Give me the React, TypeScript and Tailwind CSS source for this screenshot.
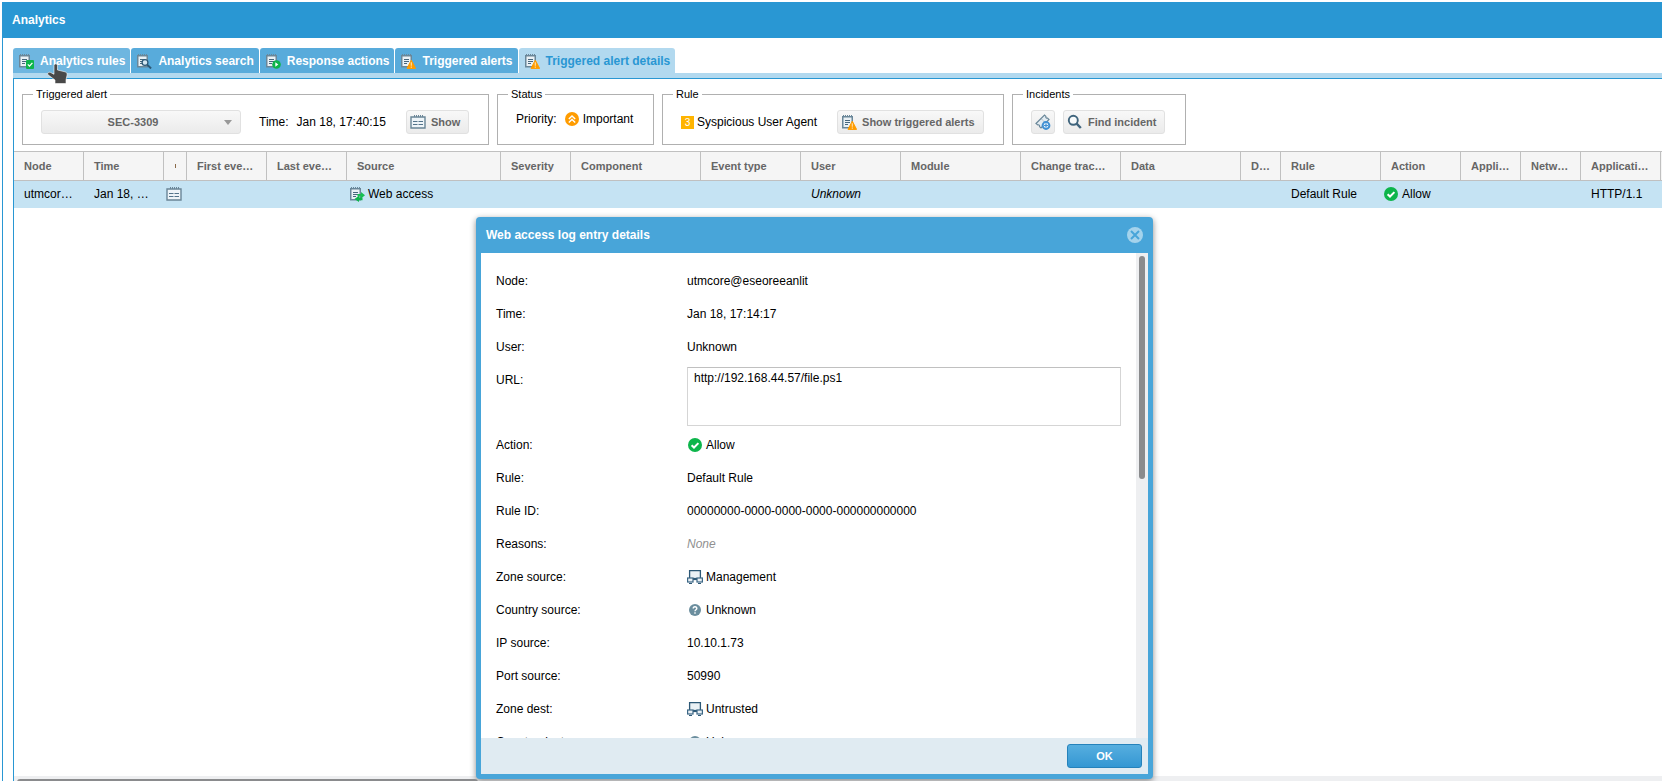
import React, { useState } from 'react';

type IconProps = { className?: string };

// -- ICONS --
const Svg = ({ size = 16, children, className = "" }: any) => (
  <svg width={size} height={size} viewBox={`0 0 ${size} ${size}`} fill="none" aria-hidden="true" className={`shrink-0 ${className}`}>
    {children}
  </svg>
);

const Notepad = () => (
  <>
    <path d="M1.75 2.75h9.5v11h-9.5z" fill="#eaf1f5" stroke="#6a8799" strokeWidth="1.5" />
    <path d="M2.5 1v1.5M4.5 1v1.5M6.5 1v1.5M8.5 1v1.5M10.5 1v1.5" stroke="#6a8799" />
    <path d="M4 6.5h5M4 8.5h5M4 10.5h3" stroke="#47677d" />
  </>
);

const RulesIcon = () => (
  <Svg>
    <Notepad />
    <rect x="8" y="7" width="8" height="9" rx="1" fill="#0db54b" />
    <path d="M9.8 11.4l1.7 1.7 2.9-3.2" stroke="#fff" strokeWidth="1.3" />
  </Svg>
);

const SearchTabIcon = () => (
  <Svg>
    <Notepad />
    <circle cx="9" cy="9.5" r="2.9" fill="#d3e6f1" stroke="#2c5876" strokeWidth="1.3" />
    <path d="M11.2 11.7l3.9 3.8" stroke="#2c5876" strokeWidth="1.9" />
  </Svg>
);

const ResponseIcon = () => (
  <Svg>
    <Notepad />
    <circle cx="11.5" cy="11.5" r="4.3" fill="#0db54b" />
    <path d="M10.3 9.2v4.6l3-2.3z" fill="#fff" />
  </Svg>
);

const AlertIcon = () => (
  <Svg>
    <Notepad />
    <path d="M11.3 7.2L15.6 15.4H7z" fill="#ff9c00" stroke="#ff9c00" strokeLinejoin="round" />
    <path d="M11.3 9.3v3.4M11.3 13.6v1.2" stroke="#ffe3b0" strokeWidth="1.1" />
  </Svg>
);

const WebAccessIcon = () => (
  <Svg>
    <Notepad />
    <path d="M8.5 8h3.5V6l4 3.2-4 3.2v-2H8.5z" fill="#16bf52" />
    <path d="M13.5 11.5H10V9.8l-4.5 3.3L10 16v-1.8h3.5z" fill="#0db54b" />
  </Svg>
);

const LogIcon = () => (
  <Svg>
    <path d="M1 3h14v11H1z" fill="#eef4f8" stroke="#6a8597" strokeWidth="1.4" />
    <path d="M4.5 1v2M6.5 1v2M8.5 1v2M10.5 1v2M12.5 1v2" stroke="#6a8597" />
    <path d="M3 7.5h4.5M8.5 7.5H13M3 10.5h4.5M8.5 10.5H13" stroke="#53738a" />
  </Svg>
);

const ImportantIcon = () => (
  <Svg size={14}>
    <circle cx="7" cy="7" r="7" fill="#ff9c00" />
    <path d="M3.8 7L7 4l3.2 3M3.8 10.4L7 7.4l3.2 3" stroke="#fff" strokeWidth="1.4" />
  </Svg>
);

const AllowIcon = ({ className }: IconProps) => (
  <Svg size={14} className={className}>
    <circle cx="7" cy="7" r="7" fill="#0db54b" />
    <path d="M3.6 7.2l2.4 2.3 4.4-4.4" stroke="#fff" strokeWidth="2" />
  </Svg>
);

const ZoneIcon = () => (
  <Svg>
    <path d="M2.6 9V1.6h10.8V9z" fill="#eaf1f5" />
    <path d="M2.6 9V1.6h10.8V9" stroke="#2c5876" strokeWidth="1.3" />
    <path d="M6 10h4" stroke="#2c5876" strokeWidth="2.2" />
    <rect x="0.6" y="9" width="5.4" height="4" fill="#eaf1f5" stroke="#3c6785" strokeWidth="1.2" />
    <rect x="10" y="9" width="5.4" height="4" fill="#eaf1f5" stroke="#3c6785" strokeWidth="1.2" />
    <path d="M2 14.5h3M11 14.5h3" stroke="#2c5876" />
  </Svg>
);

const QuestionIcon = () => (
  <Svg>
    <circle cx="8" cy="8" r="6" fill="#6b8e9e" />
    <path d="M6.2 6.5c0-2.4 3.6-2.4 3.6 0 0 1.3-1.8 1.3-1.8 2.8M8 10.2v1.5" stroke="#fff" strokeWidth="1.4" />
  </Svg>
);

const TicketIcon = () => (
  <Svg>
    <path d="M1 9.5L9.5 1l1.4 1.4c-.4 1.2.6 2.1 1.7 1.7L14 5.5 6 14l-1.5-1.4c.4-1.2-.5-2.1-1.8-1.7z" fill="#e3ecf2" stroke="#6a8799" strokeWidth="1.2" />
    <path d="M7 5.5l3.5 3.5" stroke="#6a8799" strokeDasharray="1 1" />
    <circle cx="11" cy="11.5" r="3.4" fill="#e6f1fa" stroke="#4191d4" strokeWidth="2" />
    <path d="M11 9.5v4M9 11.5h4" stroke="#4191d4" strokeWidth="1.2" />
  </Svg>
);

const FindIcon = () => (
  <Svg>
    <circle cx="6.3" cy="6.3" r="4.5" fill="#f7fafb" stroke="#40657d" strokeWidth="1.9" />
    <path d="M9.4 9.4l4.4 4.6" stroke="#40657d" strokeWidth="2.4" />
  </Svg>
);

const CloseIcon = () => (
  <Svg>
    <circle cx="8" cy="8" r="8" fill="#a4d3ec" />
    <path d="M4 4l8 8M12 4l-8 8" stroke="#48a5d9" strokeWidth="2" />
  </Svg>
);

const HandPointer = () => (
  <svg width="22" height="22" viewBox="0 0 22 22" aria-hidden="true" className="pointer-events-none absolute left-[34px] top-[15px] z-10">
    <path d="M7 2.5C7 .4 10.5 .4 10.5 2.5V7l7.5 1.8c1.8.5 2.3 1.5 2.1 3.2L19 17v3.5H8V17L1 11.8c-1.2-1.6.9-3.3 2.8-2.2L7 11.3z" fill="#494949" stroke="#fff" strokeWidth="0.6" />
  </svg>
);

// -- DATA --
const tabs = [
  { name: "Analytics rules", icon: RulesIcon },
  { name: "Analytics search", icon: SearchTabIcon },
  { name: "Response actions", icon: ResponseIcon },
  { name: "Triggered alerts", icon: AlertIcon },
  { name: "Triggered alert details", icon: AlertIcon },
];

const columns: { title: React.ReactNode; width: number; cell?: React.ReactNode; tight?: boolean }[] = [
  { title: "Node", width: 70, cell: "utmcore@eseoreeanlit" },
  { title: "Time", width: 80, cell: "Jan 18, 17:14:17" },
  { title: <span className="mx-auto block h-1 w-px bg-[#8a6a4a]" />, width: 23, cell: <LogIcon />, tight: true },
  { title: "First event time", width: 80 },
  { title: "Last event time", width: 80 },
  { title: "Source", width: 154, cell: <><WebAccessIcon /><span>Web access</span></>, tight: true },
  { title: "Severity", width: 70 },
  { title: "Component", width: 130 },
  { title: "Event type", width: 100 },
  { title: "User", width: 100, cell: <i>Unknown</i> },
  { title: "Module", width: 120 },
  { title: "Change tracker", width: 100 },
  { title: "Data", width: 120 },
  { title: "Details", width: 40 },
  { title: "Rule", width: 100, cell: "Default Rule" },
  { title: "Action", width: 80, cell: <><AllowIcon className="mx-px" /><span>Allow</span></>, tight: true },
  { title: "Application", width: 60 },
  { title: "Network", width: 60 },
  { title: "Application protocol", width: 80, cell: "HTTP/1.1" },
  { title: "", width: 80 },
];

const details: { label: string; value: React.ReactNode }[] = [
  { label: "Node:", value: "utmcore@eseoreeanlit" },
  { label: "Time:", value: "Jan 18, 17:14:17" },
  { label: "User:", value: "Unknown" },
  { label: "URL:", value: null },
  { label: "Action:", value: <><AllowIcon className="mx-px" />Allow</> },
  { label: "Rule:", value: "Default Rule" },
  { label: "Rule ID:", value: "00000000-0000-0000-0000-000000000000" },
  { label: "Reasons:", value: <i className="text-[#909090]">None</i> },
  { label: "Zone source:", value: <><ZoneIcon />Management</> },
  { label: "Country source:", value: <><QuestionIcon />Unknown</> },
  { label: "IP source:", value: "10.10.1.73" },
  { label: "Port source:", value: "50990" },
  { label: "Zone dest:", value: <><ZoneIcon />Untrusted</> },
  { label: "Country dest:", value: <><QuestionIcon />Unknown</> },
];

// -- TOOLBAR PARTS --
const Group = ({ title, children, className = "" }: any) => (
  <fieldset className={`h-[58px] border border-[#b0b0b0] ${className}`}>
    <legend className="ml-2.5 px-[3px] text-[11px] leading-3.5">{title}</legend>
    <div className="flex h-9 items-center pt-1.5">{children}</div>
  </fieldset>
);

const ToolButton = ({ icon: Icon, children, label, className = "" }: any) => (
  <button
    aria-label={label}
    className={`flex h-6 items-center rounded-[3px] border border-[#e1e1e1] bg-linear-to-b from-[#f8f8f8] to-[#ebebeb] text-[11px] font-bold text-[#666] ${className}`}
  >
    <Icon />
    {children}
  </button>
);

// -- DETAILS DIALOG --
const DetailsDialog = ({ onClose }: { onClose: () => void }) => (
  <div
    role="dialog"
    aria-labelledby="dialog-title"
    className="absolute bottom-0.5 left-[476px] top-[217px] flex w-[677px] flex-col rounded bg-[#48a5d9] px-[5px] pb-[5px] shadow-[0_2px_6px_#888]"
  >
    <div className="flex h-9 shrink-0 items-center justify-between px-[5px]">
      <h2 id="dialog-title" className="font-bold text-white">Web access log entry details</h2>
      <button aria-label="Close" onClick={onClose}><CloseIcon /></button>
    </div>
    <div className="flex min-h-0 flex-1 bg-white">
      <div className="flex min-w-0 flex-1 flex-col gap-[5px] overflow-hidden px-[15px] pt-3.5">
        {details.map(({ label, value }) => (
          <div key={label} className="flex shrink-0">
            {label === "URL:" ? (
              <>
                <label htmlFor="url" className="w-[191px] leading-7">{label}</label>
                <textarea
                  id="url"
                  readOnly
                  defaultValue="http://192.168.44.57/file.ps1"
                  className="mt-px h-[59px] flex-1 resize-none border border-[#d5d5d5] border-t-[#c0c0c0] px-1.5 py-0.5 leading-4"
                />
              </>
            ) : (
              <>
                <span className="w-[191px] leading-7">{label}</span>
                <span className="flex items-center gap-[3px] leading-7">{value}</span>
              </>
            )}
          </div>
        ))}
      </div>
      <div className="w-3 bg-[#eeeff1] px-[3px] pt-[3px]">
        <div className="h-[223px] rounded-full bg-[#8a8b8d]" />
      </div>
    </div>
    <div className="flex h-9 shrink-0 items-center justify-end bg-[#e0ebf2] px-1.5">
      <button onClick={onClose} className="h-6 w-[75px] rounded-[3px] border border-[#2582bb] bg-linear-to-b from-[#56aedf] to-[#3397d3] text-[11px] font-bold text-white">
        OK
      </button>
    </div>
  </div>
);

// -- MAIN PAGE --
export default function App() {
  const [activeTab, setActiveTab] = useState("Triggered alert details");
  const [dialogOpen, setDialogOpen] = useState(true);

  return (
    <div className="relative flex h-screen flex-col overflow-hidden bg-white pl-0.5 pt-0.5 font-['Liberation_Sans',Arial,sans-serif] text-xs text-black">
      <header className="flex h-9 shrink-0 items-center bg-[#2997d3] px-2.5">
        <h1 className="font-bold text-white">Analytics</h1>
      </header>

      <main className="flex min-h-0 flex-1 flex-col border-l border-[#2997d3] pl-2.5 pt-2.5">
        <nav className="relative flex shrink-0 gap-px">
          {tabs.map(({ name, icon: Icon }, i) => (
            <button
              key={name}
              onClick={() => setActiveTab(name)}
              className={`flex h-[25px] items-center gap-1.5 rounded-t-[3px] px-[5px] font-bold ${
                name === activeTab ? "bg-[#b2d9ef] text-[#2997d3]" : i === 0 ? "bg-[#6eb6e0] text-white" : "bg-[#58abdb] text-white"
              }`}
            >
              <Icon />
              {name}
            </button>
          ))}
          <HandPointer />
        </nav>
        <div className="h-[5px] shrink-0 bg-[#b2d9ef]" />

        <section className="flex min-h-0 flex-1 flex-col border-l border-t border-[#2997d3]">
          <div className="flex shrink-0 gap-2 px-2 pb-1.5 pt-2">
            <Group title="Triggered alert" className="w-[467px]">
              <div className="relative ml-[18px]">
                <select aria-label="Triggered alert" className="h-6 w-[200px] appearance-none rounded-[3px] border border-[#e1e1e1] bg-linear-to-b from-[#f8f8f8] to-[#ebebeb] pr-4 text-center text-[11px] font-bold text-[#666] [text-align-last:center]">
                  <option>SEC-3309</option>
                </select>
                <svg width="8" height="5" viewBox="0 0 8 5" aria-hidden="true" className="pointer-events-none absolute right-[9px] top-2.5">
                  <path d="M0 0h8L4 5z" fill="#999" />
                </svg>
              </div>
              <span className="ml-[18px]">Time:</span>
              <span className="ml-2">Jan 18, 17:40:15</span>
              <ToolButton icon={LogIcon} className="ml-5 gap-[5px] pl-[3px] pr-2">Show</ToolButton>
            </Group>

            <Group title="Status" className="w-[157px]">
              <div className="flex items-center pb-1.5 pl-[18px]">
                <span className="mr-2">Priority:</span>
                <ImportantIcon />
                <span className="ml-1">Important</span>
              </div>
            </Group>

            <Group title="Rule" className="w-[342px]">
              <span className="ml-[18px] mr-[3px] h-[13px] w-[13px] bg-[#ffb400] text-center text-[10px] leading-[13px] text-white">3</span>
              <span>Syspicious User Agent</span>
              <ToolButton icon={AlertIcon} className="ml-5 gap-[5px] pl-[3px] pr-2">Show triggered alerts</ToolButton>
            </Group>

            <Group title="Incidents" className="w-[174px]">
              <ToolButton icon={TicketIcon} label="Create incident" className="ml-[18px] w-6 justify-center" />
              <ToolButton icon={FindIcon} className="ml-2 gap-[5px] pl-[3px] pr-2">Find incident</ToolButton>
            </Group>
          </div>

          <div className="min-h-0 flex-1 overflow-hidden">
            <table className="w-[1727px] table-fixed border-separate border-spacing-0">
              <colgroup>
                {columns.map((col, i) => <col key={i} style={{ width: col.width }} />)}
              </colgroup>
              <thead>
                <tr className="h-[30px] bg-[#f5f5f5]">
                  {columns.map((col, i) => (
                    <th key={i} className={`truncate border-y border-r border-[#c0c0c0] text-left text-[11px] text-[#666] ${i === 2 ? "" : "px-2.5"}`}>
                      {col.title}
                    </th>
                  ))}
                </tr>
              </thead>
              <tbody>
                <tr className="h-[27px] bg-[#c5e3f3]">
                  {columns.map((col, i) => (
                    <td key={i} className={`truncate pb-0.5 ${col.tight ? "px-0.5" : "px-2.5"}`}>
                      {col.tight ? <div className="flex items-center gap-[3px]">{col.cell}</div> : col.cell}
                    </td>
                  ))}
                </tr>
              </tbody>
            </table>
          </div>
          <div className="h-[5px] shrink-0 overflow-hidden bg-[#eeeff1] pl-[3px] pt-[3px]">
            <div className="h-1.5 w-[461px] rounded-full bg-[#8a8b8d]" />
          </div>
        </section>
      </main>

      {dialogOpen && <DetailsDialog onClose={() => setDialogOpen(false)} />}
    </div>
  );
}
